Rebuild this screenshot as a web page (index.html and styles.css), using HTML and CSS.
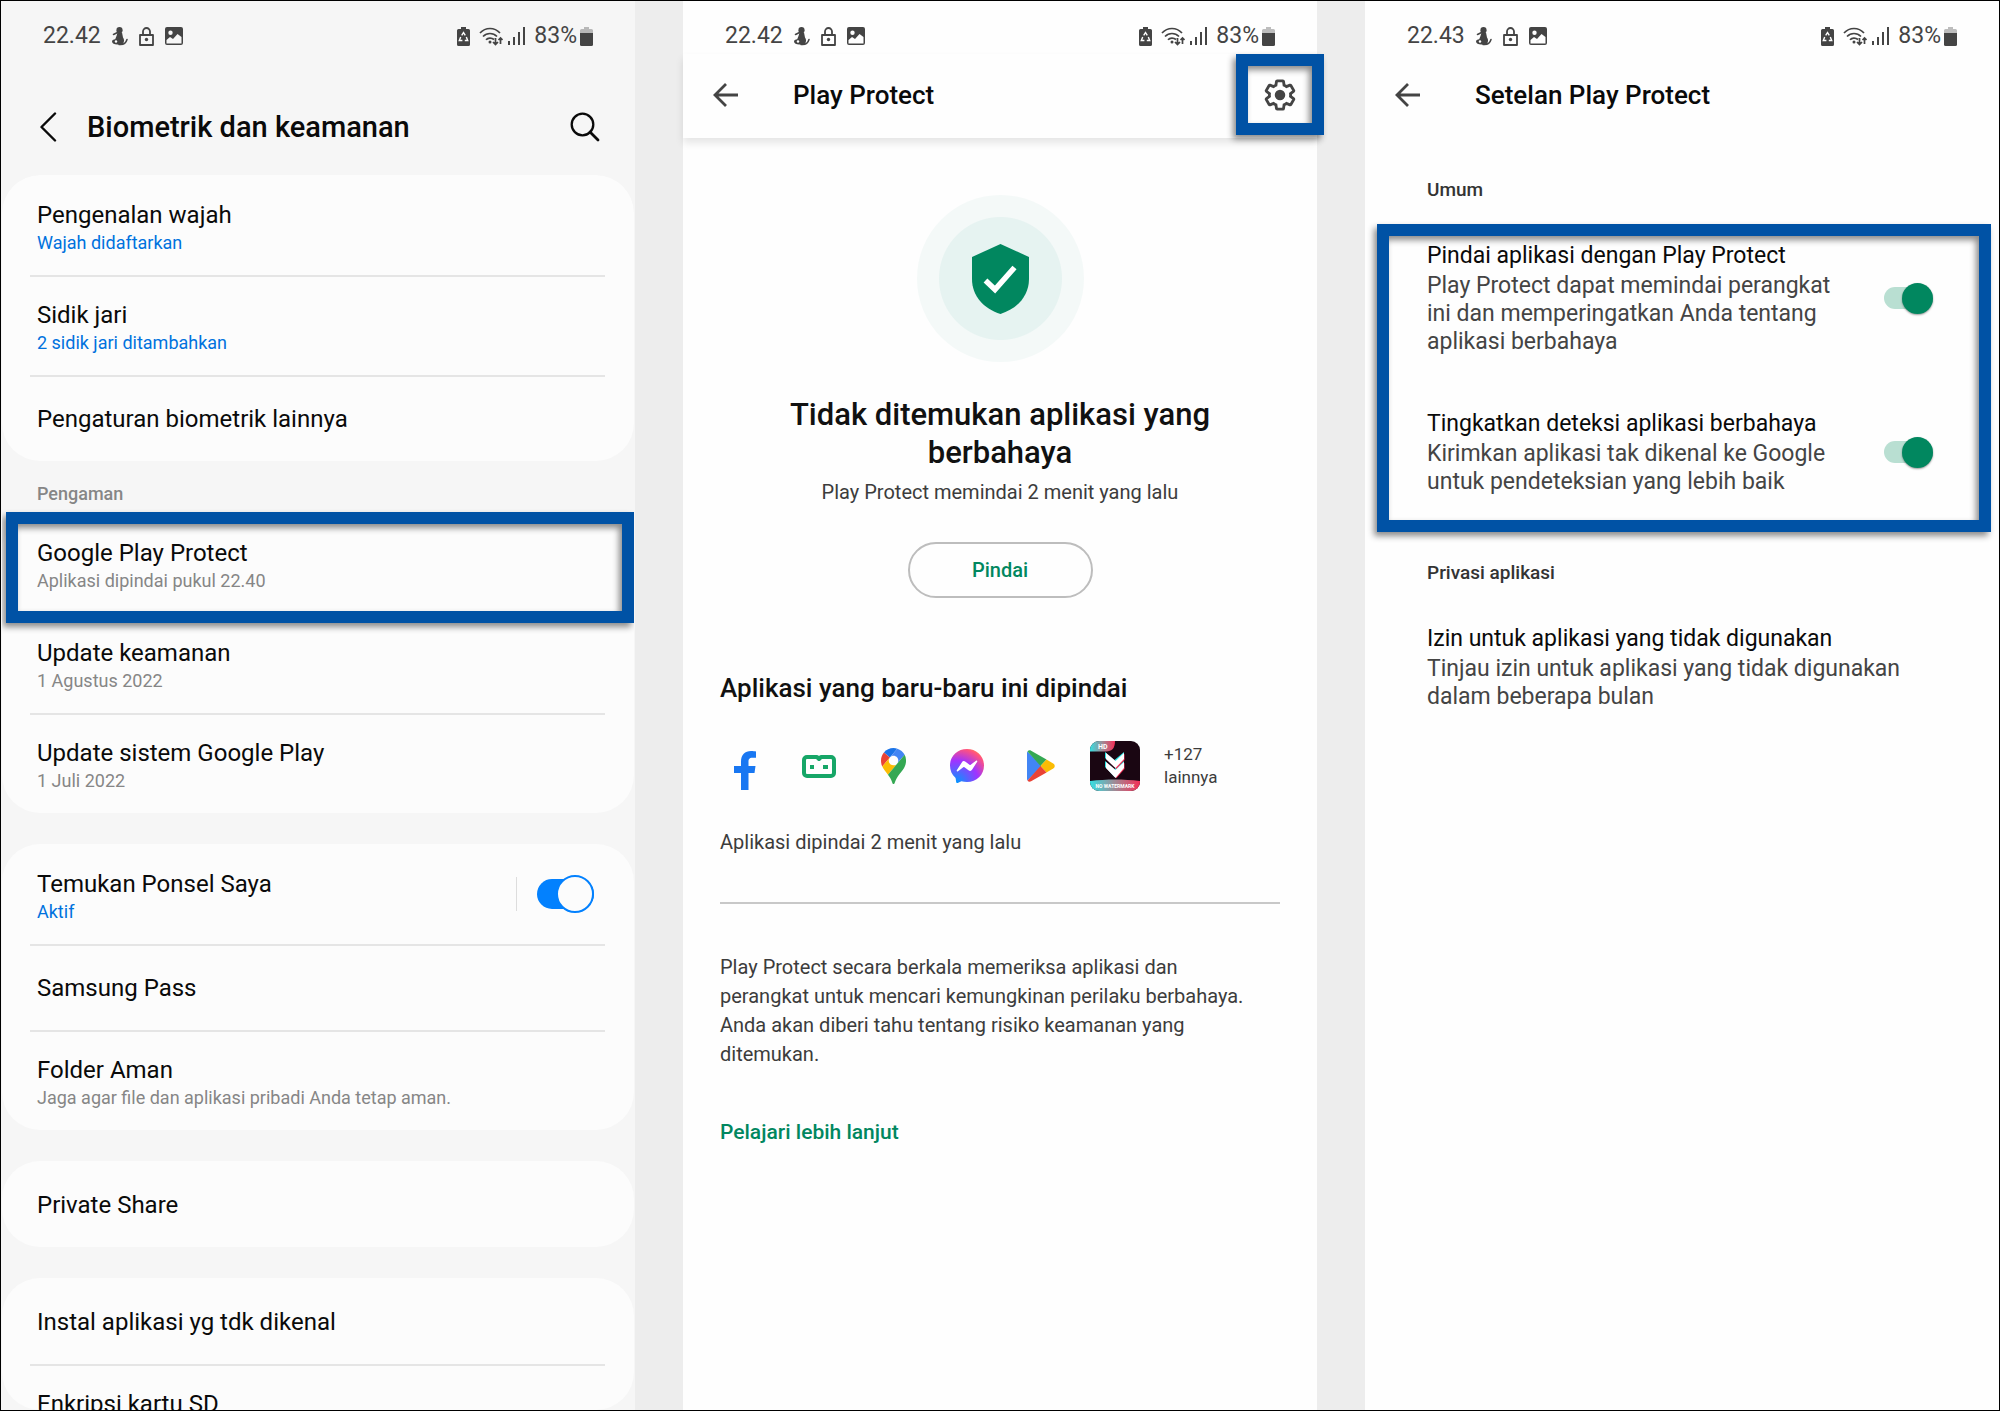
FILE: index.html
```html
<!doctype html>
<html lang="id">
  <head>
    <meta charset="UTF-8" />
    <meta name="viewport" content="width=device-width, initial-scale=1.0" />
    <title>Play Protect</title>
    <link rel="stylesheet" href="styles.css">
  </head>
  <body>
    <svg class="sprite" aria-hidden="true">
      <symbol id="i-person" viewBox="0 0 17 19">
        <circle cx="8.500" cy="3.200" r="3.100" />
        <path d="M6.500 5.500h4.500l1 5c1.500 2 1.500 4.500-.5 7H6C3.500 17.500 1 16.500 1 14.500c0-1.500 1.500-2 3.200-2.300L5.500 9z" />
        <path d="M8 17.500c4 .5 7-1.500 8-5M2.500 7.500l4-2" fill="none" stroke="currentColor" stroke-width="1.500" stroke-linecap="round" />
        <circle cx="5" cy="14.500" r="1.200" fill="#fff" />
      </symbol>
      <symbol id="i-lock" viewBox="0 0 15 19">
        <path d="M1 8h13v10H1zM4 8V4.500a3.500 3.500 0 0 1 7 0V8" fill="none" stroke="currentColor" stroke-width="1.800" stroke-linejoin="round" />
        <circle cx="7.500" cy="12.500" r="1.700" />
      </symbol>
      <symbol id="i-image" viewBox="0 0 18 18">
        <path fill-rule="evenodd" d="M2 0h14a2 2 0 0 1 2 2v14a2 2 0 0 1-2 2H2a2 2 0 0 1-2-2V2a2 2 0 0 1 2-2zM5.500 3.500a2.200 2.200 0 1 0 0 4.400 2.200 2.200 0 0 0 0-4.400zM1.500 13v3.500h15V10l-4-3L8 12l-3-2z" />
      </symbol>
      <symbol id="i-recycle" viewBox="0 0 13 19">
        <path d="M4 0h5v2h2.500A1.500 1.500 0 0 1 13 3.500v14a1.500 1.500 0 0 1-1.500 1.500h-10A1.500 1.500 0 0 1 0 17.500v-14A1.500 1.500 0 0 1 1.500 2H4z" />
        <path d="M4.700 8.300 6.500 5.500l1.800 2.800M9.300 10l1.400 3.500H7.800M5.400 13.500H2.300L3.700 10" fill="none" stroke="#fff" stroke-width="1.400" />
      </symbol>
      <symbol id="i-wifi" viewBox="0 0 24 19">
        <path d="M1 6c5.500-6 14.500-6 20 0M4 9.500c4-4 10-4 14 0M7 12.800c2-2.200 5.500-2.400 8-.3M16.500 11v6.500M14 15l2.500 2.500L19 15M21.500 17v-6M19.500 13l2-2 2 2" fill="none" stroke="currentColor" stroke-width="1.700" />
        <circle cx="11" cy="15" r="1.500" />
      </symbol>
      <symbol id="i-signal" viewBox="0 0 17 18">
        <path d="M0 14h2v4H0zM5 10h2v8H5zM10 5h2v13h-2zM15 0h2v18h-2z" />
      </symbol>
      <symbol id="i-battery" viewBox="0 0 13 19">
        <path opacity=".35" d="M4 0h5v2h2.500A1.500 1.500 0 0 1 13 3.500V6H0V3.500A1.500 1.500 0 0 1 1.500 2H4z" />
        <path d="M0 6h13v11.500a1.500 1.500 0 0 1-1.500 1.500h-10A1.500 1.500 0 0 1 0 17.500z" />
      </symbol>
      <symbol id="i-arrow" viewBox="0 0 26 26">
        <path d="M25 13H2M13 2 2 13l11 11" fill="none" stroke="currentColor" stroke-width="2.800" />
      </symbol>
    </svg>

    <main class="screens">
      <section class="phone phone-settings">
        <div class="status">
          <time class="clock">22.42</time>
          <svg width="17" height="19"><use href="#i-person" /></svg>
          <svg class="lock" width="15" height="19"><use href="#i-lock" /></svg>
          <svg width="18" height="18"><use href="#i-image" /></svg>
          <svg class="recycle" width="13" height="19"><use href="#i-recycle" /></svg>
          <svg class="wifi" width="24" height="19"><use href="#i-wifi" /></svg>
          <svg class="signal" width="17" height="18"><use href="#i-signal" /></svg>
          <span>83%</span>
          <svg class="battery" width="13" height="19"><use href="#i-battery" /></svg>
        </div>
        <header class="settings-bar">
          <button type="button" class="icon-button" aria-label="Kembali">
            <svg width="18" height="30" viewBox="0 0 18 30"><path d="M16 1.500 2.500 15 16 28.500" fill="none" stroke="currentColor" stroke-width="2.400" stroke-linecap="round" stroke-linejoin="round" /></svg>
          </button>
          <h1>Biometrik dan keamanan</h1>
          <button type="button" class="icon-button" aria-label="Cari">
            <svg width="30" height="30" viewBox="0 0 30 30"><path d="M20 20l8 8" fill="none" stroke="currentColor" stroke-width="2.800" stroke-linecap="round" /><circle cx="12.500" cy="12.500" r="10.800" fill="none" stroke="currentColor" stroke-width="2.300" /></svg>
          </button>
        </header>

        <div class="list">
          <div class="card">
            <a class="row" href="#wajah"><span class="name">Pengenalan wajah</span><span class="note on">Wajah didaftarkan</span></a>
            <a class="row" href="#sidik"><span class="name">Sidik jari</span><span class="note on">2 sidik jari ditambahkan</span></a>
            <a class="row single" href="#biometrik"><span class="name">Pengaturan biometrik lainnya</span></a>
          </div>
          <h2 class="group">Pengaman</h2>
          <div class="card">
            <a class="row marked" href="#protect"><span class="name">Google Play Protect</span><span class="note">Aplikasi dipindai pukul 22.40</span></a>
            <a class="row" href="#keamanan"><span class="name">Update keamanan</span><span class="note">1 Agustus 2022</span></a>
            <a class="row" href="#sistem"><span class="name">Update sistem Google Play</span><span class="note">1 Juli 2022</span></a>
          </div>
          <div class="card spaced">
            <label class="row with-switch">
              <span class="name">Temukan Ponsel Saya</span>
              <span class="note on">Aktif</span>
              <span class="switch-cell"><input type="checkbox" class="switch-blue" checked /></span>
            </label>
            <a class="row single" href="#pass"><span class="name">Samsung Pass</span></a>
            <a class="row" href="#folder"><span class="name">Folder Aman</span><span class="note">Jaga agar file dan aplikasi pribadi Anda tetap aman.</span></a>
          </div>
          <div class="card spaced">
            <a class="row single" href="#share"><span class="name">Private Share</span></a>
          </div>
          <div class="card spaced">
            <a class="row single" href="#instal"><span class="name">Instal aplikasi yg tdk dikenal</span></a>
            <a class="row" href="#enkripsi"><span class="name">Enkripsi kartu SD</span></a>
          </div>
        </div>
      </section>

      <section class="phone">
        <div class="status">
          <time class="clock">22.42</time>
          <svg width="17" height="19"><use href="#i-person" /></svg>
          <svg class="lock" width="15" height="19"><use href="#i-lock" /></svg>
          <svg width="18" height="18"><use href="#i-image" /></svg>
          <svg class="recycle" width="13" height="19"><use href="#i-recycle" /></svg>
          <svg class="wifi" width="24" height="19"><use href="#i-wifi" /></svg>
          <svg class="signal" width="17" height="18"><use href="#i-signal" /></svg>
          <span>83%</span>
          <svg class="battery" width="13" height="19"><use href="#i-battery" /></svg>
        </div>
        <header class="app-bar raised">
          <button type="button" class="icon-button" aria-label="Kembali"><svg width="26" height="26"><use href="#i-arrow" /></svg></button>
          <h1>Play Protect</h1>
          <button type="button" class="icon-button gear" aria-label="Setelan">
            <svg width="34" height="34" viewBox="0 0 24 24">
              <path fill="none" stroke="currentColor" stroke-width="2" d="M19.430 12.980c.04-.32.07-.64.07-.98s-.03-.66-.07-.98l2.110-1.650c.19-.15.24-.42.12-.64l-2-3.460c-.09-.16-.26-.25-.44-.25-.06 0-.12.01-.17.03l-2.490 1c-.52-.4-1.080-.73-1.690-.98l-.38-2.650C14.460 2.180 14.250 2 14 2h-4c-.25 0-.46.18-.49.42l-.38 2.650c-.61.25-1.170.59-1.690.98l-2.490-1c-.06-.02-.12-.03-.18-.03-.17 0-.34.09-.43.25l-2 3.460c-.13.22-.07.49.12.64l2.110 1.650c-.04.32-.07.65-.07.98s.03.66.07.98l-2.110 1.650c-.19.15-.24.42-.12.64l2 3.460c.09.16.26.25.44.25.06 0 .12-.01.17-.03l2.490-1c.52.4 1.080.73 1.690.98l.38 2.650c.03.24.24.42.49.42h4c.25 0 .46-.18.49-.42l.38-2.650c.61-.25 1.170-.59 1.690-.98l2.490 1c.06.02.12.03.18.03.17 0 .34-.09.43-.25l2-3.460c.12-.22.07-.49-.12-.64z" />
              <circle cx="12" cy="12" r="3.700" fill="currentColor" />
            </svg>
          </button>
        </header>

        <div class="protect">
          <div class="halo">
            <svg width="59" height="70" viewBox="0 0 59 70">
              <path d="M29.500 0 58 13v22c0 17-12 30-28.500 35C13 65 1 52 1 35V13z" fill="#01875f" />
              <path d="M14.500 36.500 24 45.500 43.500 23.500" fill="none" stroke="#fff" stroke-width="5.500" />
            </svg>
          </div>
          <h2 class="verdict">Tidak ditemukan aplikasi yang berbahaya</h2>
          <p class="scanned">Play Protect memindai 2 menit yang lalu</p>
          <button type="button" class="scan">Pindai</button>

          <h3 class="recent">Aplikasi yang baru-baru ini dipindai</h3>
          <ul class="apps">
            <li><svg class="low" width="22" height="39" viewBox="0 0 22 39"><path fill="#1877f2" d="M7 39V22H0v-7h7v-4C7 3.500 11 0 17 0c2 0 4 .2 5 .5v6.200h-3.500c-3.500 0-4 2-4 4V15h7l-1 7h-6v17z" /></svg></li>
            <li>
              <svg width="34" height="23" viewBox="0 0 34 23">
                <path fill="none" stroke="#16a667" stroke-width="4" stroke-linejoin="round" d="M15 2H5a3 3 0 0 0-3 3v13a3 3 0 0 0 3 3h24a3 3 0 0 0 3-3V5a3 3 0 0 0-3-3H19l-2 2z" />
                <path fill="#16a667" d="M8 10h4v4H8zM21 10h5v4h-5z" />
              </svg>
            </li>
            <li>
              <svg width="25" height="36" viewBox="0 0 92.300 132.300">
                <path fill="#1a73e8" d="M60.200 2.200C55.800.8 51 0 46.100 0 32 0 19.300 6.400 10.800 16.500l21.800 18.300L60.200 2.200z" />
                <path fill="#ea4335" d="M10.800 16.500C4.100 24.500 0 34.900 0 46.100c0 8.700 1.700 15.700 4.600 22l28-33.300-21.800-18.300z" />
                <path fill="#4285f4" d="M46.200 28.500c9.800 0 17.700 7.900 17.700 17.700 0 4.300-1.600 8.300-4.200 11.400 0 0 13.900-16.600 27.500-32.700-5.600-10.800-15.300-19-27-22.700L32.600 34.800c3.300-3.800 8.100-6.300 13.600-6.300" />
                <path fill="#fbbc04" d="M46.200 63.800c-9.800 0-17.700-7.900-17.700-17.700 0-4.300 1.500-8.300 4.100-11.300l-28 33.300c4.800 10.600 12.800 19.200 21 29.900l34.100-40.500c-3.300 3.900-8.100 6.300-13.500 6.300" />
                <path fill="#34a853" d="M59.100 109.200c15.400-24.100 33.300-35 33.300-63 0-7.700-1.900-14.900-5.200-21.300L25.600 98c2.600 3.400 5.300 7.300 7.900 11.300 9.400 14.500 6.800 23.100 12.800 23.100s3.400-8.700 12.800-23.200" />
              </svg>
            </li>
            <li>
              <svg width="34" height="34" viewBox="0 0 34 34">
                <defs>
                  <radialGradient id="messenger" cx=".19" cy="1" r="1.100">
                    <stop offset="0" stop-color="#0099ff" />
                    <stop offset=".6" stop-color="#a033ff" />
                    <stop offset=".93" stop-color="#ff5280" />
                    <stop offset="1" stop-color="#ff7061" />
                  </radialGradient>
                </defs>
                <path fill="url(#messenger)" d="M17 0C7.400 0 0 7 0 16.500c0 5 2 9.300 5.400 12.300.5.500.5 3.200.8 4.400.1.700.8 1 1.500.7l3.700-1.600c1.800.5 3.600.7 5.600.7 9.600 0 17-7 17-16.500S26.600 0 17 0z" />
                <path fill="#fff" d="M6.800 21.300 11.800 13.400a2.500 2.500 0 0 1 3.700-.7l4 3a1 1 0 0 0 1.200 0l5.300-4c.7-.6 1.700.3 1.200 1L22.200 20.600a2.500 2.500 0 0 1-3.700.7l-4-3a1 1 0 0 0-1.200 0l-5.300 4c-.7.6-1.700-.3-1.200-1z" />
              </svg>
            </li>
            <li>
              <svg width="28" height="32" viewBox="0 0 28 32">
                <path fill="#4285f4" d="M.5 1.500 14.500 16 .5 30.500C.2 30 0 29.500 0 29V3c0-.6.2-1.100.5-1.500z" />
                <path fill="#34a853" d="M.5 1.500C1.300.2 2.800-.1 4.100.7L19.500 9.500 13.500 16z" />
                <path fill="#fbbc04" d="m19.500 9.500 6.700 4c2 1.200 2 3.800 0 5l-6.700 4L13.500 16z" />
                <path fill="#ea4335" d="M.5 30.500c.8 1.300 2.300 1.600 3.600.8l15.400-8.800L13.500 16z" />
              </svg>
            </li>
            <li>
              <svg width="50" height="50" viewBox="0 0 50 50">
                <defs>
                  <linearGradient id="ribbon">
                    <stop offset="0" stop-color="#35dfe2" />
                    <stop offset=".5" stop-color="#a08a95" />
                    <stop offset="1" stop-color="#f52e56" />
                  </linearGradient>
                  <clipPath id="tile"><rect width="50" height="50" rx="9" /></clipPath>
                </defs>
                <g clip-path="url(#tile)">
                  <path fill="#1a0612" d="M0 0h50v50H0z" />
                  <path fill="url(#ribbon)" d="M0 0h25c0 7-3 10.500-9 10.500H0z" />
                  <path fill="url(#ribbon)" d="M0 40c17-2 33-2 50 0v10H0z" />
                  <path fill="#29e6e6" d="m15 11 9.500 8L34 11v6l-9.500 9-9.500-9zM15 20l9.500 8 9.500-8v6l-9.500 10L15 26z" />
                  <path fill="#f52e56" d="m17 13 9.500 8 8-8v6l-8 9L17 19zM17 22l9.500 8 8-8v6l-8 9L17 28z" />
                  <path fill="#fff" d="m16 12 9.500 8 8.500-8v6l-8.500 9L16 18zM16 21l9.500 8 8.500-8v6l-8.500 10L16 27z" />
                </g>
                <text x="8" y="8" class="tile-hd">HD</text>
                <text x="25" y="47" class="tile-label">NO WATERMARK</text>
              </svg>
            </li>
            <li class="more">+127<br />lainnya</li>
          </ul>
          <p class="last-scan">Aplikasi dipindai 2 menit yang lalu</p>
          <hr />
          <p class="about">Play Protect secara berkala memeriksa aplikasi dan perangkat untuk mencari kemungkinan perilaku berbahaya. Anda akan diberi tahu tentang risiko keamanan yang ditemukan.</p>
          <a class="learn" href="#pelajari">Pelajari lebih lanjut</a>
        </div>
      </section>

      <section class="phone">
        <div class="status">
          <time class="clock">22.43</time>
          <svg width="17" height="19"><use href="#i-person" /></svg>
          <svg class="lock" width="15" height="19"><use href="#i-lock" /></svg>
          <svg width="18" height="18"><use href="#i-image" /></svg>
          <svg class="recycle" width="13" height="19"><use href="#i-recycle" /></svg>
          <svg class="wifi" width="24" height="19"><use href="#i-wifi" /></svg>
          <svg class="signal" width="17" height="18"><use href="#i-signal" /></svg>
          <span>83%</span>
          <svg class="battery" width="13" height="19"><use href="#i-battery" /></svg>
        </div>
        <header class="app-bar">
          <button type="button" class="icon-button" aria-label="Kembali"><svg width="26" height="26"><use href="#i-arrow" /></svg></button>
          <h1>Setelan Play Protect</h1>
        </header>

        <div class="options">
          <h2>Umum</h2>
          <div class="option-group">
            <label class="option">
              <span class="option-text">
                <span class="option-name">Pindai aplikasi dengan Play Protect</span>
                <span class="option-note">Play Protect dapat memindai perangkat ini dan memperingatkan Anda tentang aplikasi berbahaya</span>
              </span>
              <input type="checkbox" class="switch-green" checked />
            </label>
            <label class="option">
              <span class="option-text">
                <span class="option-name">Tingkatkan deteksi aplikasi berbahaya</span>
                <span class="option-note">Kirimkan aplikasi tak dikenal ke Google untuk pendeteksian yang lebih baik</span>
              </span>
              <input type="checkbox" class="switch-green" checked />
            </label>
          </div>
          <h2>Privasi aplikasi</h2>
          <a class="option" href="#izin">
            <span class="option-text">
              <span class="option-name">Izin untuk aplikasi yang tidak digunakan</span>
              <span class="option-note">Tinjau izin untuk aplikasi yang tidak digunakan dalam beberapa bulan</span>
            </span>
          </a>
        </div>
      </section>
    </main>
  </body>
</html>
```

FILE: styles.css
```css
:root {
  --blue: #0072de;
  --green: #01875f;
  --marker: #0052a5;
}

* {
  box-sizing: border-box;
}

body {
  margin: 0;
  font-family: Roboto, "Liberation Sans", sans-serif;
  color: #0a0a0a;
}

h1,
h2,
h3,
p,
ul {
  margin: 0;
  padding: 0;
  font-weight: 400;
}

a {
  color: inherit;
  text-decoration: none;
}

button {
  font: inherit;
  color: inherit;
  background: none;
  border: 0;
  padding: 0;
}

svg {
  display: block;
  flex: none;
}

.sprite {
  position: absolute;
  width: 0;
  height: 0;
}

.screens {
  display: grid;
  grid-template-columns: repeat(3, 1fr);
  gap: 48px;
  height: 100vh;
  border: 1px solid #000;
  background: #ededed;
}

.phone {
  display: flex;
  flex-direction: column;
  min-width: 0;
  min-height: 0;
  background: #fefefe;
}

.phone-settings {
  background: #f6f6f6;
}

/* Status bar */

.status {
  display: flex;
  align-items: center;
  height: 53px;
  padding: 17px 42px 0;
  font-size: 23px;
  line-height: 36px;
  color: #444;
  fill: #444;
}

.clock {
  margin-right: 10px;
}

.lock {
  margin: 0 11px;
}

.recycle {
  margin-left: auto;
}

.wifi {
  margin: 0 5px 0 9px;
}

.signal {
  margin-right: 9px;
}

.battery {
  margin-left: 3px;
}

.icon-button {
  display: grid;
  place-items: center;
  width: 48px;
  height: 48px;
}

/* Hollow blue frame over a control */

.marked,
.gear,
.option-group {
  position: relative;
}

.marked::after,
.gear::after,
.option-group::after {
  content: "";
  position: absolute;
  border: 12px solid var(--marker);
  filter: drop-shadow(-3px 4px 3px rgba(0, 0, 0, 0.45));
  pointer-events: none;
}

/* Settings list */

.settings-bar {
  display: flex;
  align-items: center;
  height: 121px;
  padding: 24px 26px 0 23px;
}

.settings-bar h1 {
  flex: 1;
  margin-left: 15px;
  font-size: 29px;
  font-weight: 500;
}

.list {
  flex: 1;
  min-height: 0;
  margin: 0 1px;
  overflow: hidden;
  border-radius: 38px;
}

.card {
  padding: 0 29px 0 28px;
  border-radius: 38px;
  background: #fcfcfc;
}

.spaced {
  margin-top: 31px;
}

.row {
  display: block;
  height: 100px;
  padding: 24px 11px 0 7px;
  border-top: 2px solid transparent;
}

.row + .row {
  border-color: #e5e5e5;
}

.row + .marked,
.marked + .row {
  border-color: transparent;
}

.single {
  height: 86px;
  padding-top: 28px;
}

.name,
.note {
  display: block;
  line-height: 28px;
}

.name {
  font-size: 24px;
}

.note {
  font-size: 18px;
  color: #868686;
}

.on {
  color: var(--blue);
}

.group {
  padding: 21px 35px 7px;
  font-size: 18px;
  line-height: 24px;
  font-weight: 500;
  color: #868686;
}

.marked::after {
  inset: -3px -29px -10px -24px;
}

.with-switch {
  display: grid;
  grid-template-columns: 1fr auto;
  align-content: start;
}

.with-switch .name,
.with-switch .note {
  grid-column: 1;
}

.switch-cell {
  grid-column: 2;
  grid-row: 1 / 3;
  align-self: center;
  margin-bottom: 8px;
  padding: 2px 0 2px 20px;
  border-left: 1px solid #ddd;
}

.switch-blue,
.switch-green {
  appearance: none;
  display: flex;
  justify-content: flex-end;
  align-items: center;
  margin: 0;
}

.switch-blue {
  width: 57px;
  height: 30px;
  border-radius: 15px;
  background: #0381fe;
}

.switch-blue::before {
  content: "";
  flex: none;
  width: 34px;
  height: 34px;
  border: 2px solid #0381fe;
  border-radius: 50%;
  background: #fcfcfc;
}

/* Play Protect */

.app-bar {
  display: flex;
  align-items: center;
  height: 84px;
  padding: 0 13px 2px 19px;
}

.app-bar h1 {
  flex: 1;
  margin-left: 43px;
  font-size: 26px;
  font-weight: 500;
}

.app-bar .icon-button {
  color: #444;
}

.raised {
  box-shadow: 0 5px 8px rgba(0, 0, 0, 0.1);
}

.gear::after {
  inset: -17px -20px -16px;
}

.protect {
  display: flex;
  flex-direction: column;
  align-items: flex-start;
  padding: 57px 37px 0;
  font-size: 20px;
  line-height: 29px;
  color: #3c3c3c;
}

.halo {
  align-self: center;
  display: grid;
  place-items: center;
  width: 167px;
  height: 167px;
  border-radius: 50%;
  background: radial-gradient(circle, #e6f3f1 61px, #f4f9f8 62px);
}

.verdict {
  align-self: center;
  max-width: 480px;
  margin-top: 34px;
  font-size: 31px;
  line-height: 38px;
  font-weight: 500;
  text-align: center;
  color: #111;
}

.scanned {
  align-self: center;
  margin-top: 6px;
}

.scan {
  align-self: center;
  width: 185px;
  height: 56px;
  margin-top: 35px;
  border: 2px solid #bdbdbd;
  border-radius: 28px;
  font-weight: 500;
  color: var(--green);
}

.recent {
  margin-top: 72px;
  font-size: 26px;
  line-height: 36px;
  font-weight: 500;
  color: #111;
}

.apps {
  display: grid;
  grid-template-columns: repeat(6, 50px) auto;
  gap: 24px;
  align-items: center;
  margin-top: 35px;
  list-style: none;
}

.apps svg {
  margin: auto;
}

.apps .low {
  margin-top: 9px;
}

.tile-hd {
  font-size: 7px;
  font-weight: 700;
  fill: #fff;
}

.tile-label {
  font-size: 5px;
  font-weight: 700;
  text-anchor: middle;
  fill: #fff;
}

.more {
  font-size: 17px;
  line-height: 23px;
}

.last-scan {
  margin-top: 37px;
}

.protect hr {
  width: 100%;
  height: 2px;
  margin: 45px 0 49px;
  border: 0;
  background: #c8c8c8;
}

.about {
  max-width: 545px;
}

.learn {
  margin-top: 49px;
  font-size: 21px;
  font-weight: 500;
  color: var(--green);
}

/* Play Protect settings */

.options {
  padding: 38px 66px 0 62px;
}

.options h2 {
  font-size: 19px;
  line-height: 28px;
  font-weight: 500;
  color: #333;
}

.option-group {
  margin-bottom: 27px;
  padding-bottom: 36px;
}

.option-group::after {
  inset: 20px -58px 0 -50px;
}

.option {
  display: flex;
  align-items: center;
  justify-content: space-between;
  padding-top: 36px;
}

.option + .option {
  padding-top: 52px;
}

.option-text {
  max-width: 480px;
}

.option-group .option-text {
  max-width: 420px;
}

.option-name,
.option-note {
  display: block;
  font-size: 23px;
}

.option-name {
  line-height: 32px;
}

.option-note {
  line-height: 28px;
  color: #444;
}

.switch-green {
  width: 49px;
  height: 22px;
  border-radius: 11px;
  background: #b9dfd2;
}

.switch-green::before {
  content: "";
  flex: none;
  width: 31px;
  height: 31px;
  border-radius: 50%;
  background: var(--green);
  box-shadow: 0 1px 2px rgba(0, 0, 0, 0.4);
}
```
